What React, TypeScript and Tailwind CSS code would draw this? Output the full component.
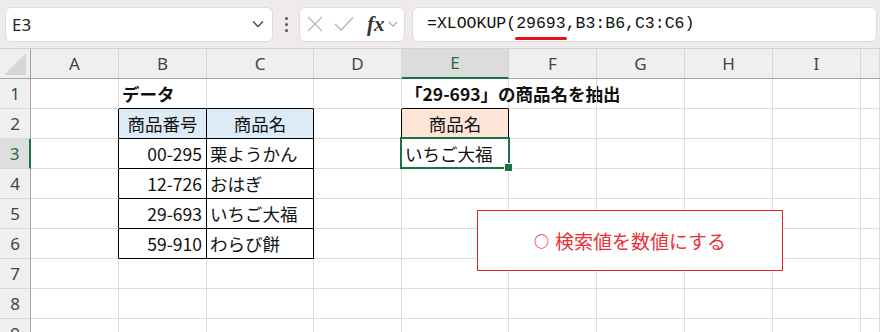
import type { ReactNode } from "react";

const COLS = ["A", "B", "C", "D", "E", "F", "G", "H", "I", "J"];
const WIDTHS = [
  "w-[88px]",
  "w-[88px]",
  "w-[107px]",
  "w-[88px]",
  "w-[107px]",
  "w-[88px]",
  "w-[88px]",
  "w-[88px]",
  "w-[88px]",
  "flex-1",
];

type Cell = {
  text?: ReactNode;
  align?: "left" | "right" | "center";
  bold?: boolean;
  bg?: string;
  right?: boolean; // black right border
  bottom?: boolean; // black bottom border
};

// row number -> column index -> cell
const DATA: Record<number, Record<number, Cell>> = {
  1: {
    1: { text: "データ", bold: true, bottom: true },
    2: { bottom: true },
    4: { text: "「29-693」の商品名を抽出", bold: true, bottom: true },
  },
  2: {
    0: { right: true },
    1: { text: "商品番号", align: "center", bg: "bg-[#ddebf7]", right: true, bottom: true },
    2: { text: "商品名", align: "center", bg: "bg-[#ddebf7]", right: true, bottom: true },
    3: { right: true },
    4: { text: "商品名", align: "center", bg: "bg-[#fce4d6]", right: true, bottom: true },
  },
  3: {
    0: { right: true },
    1: { text: "00-295", align: "right", right: true, bottom: true },
    2: { text: "栗ようかん", right: true, bottom: true },
    4: { text: "いちご大福" },
  },
  4: {
    0: { right: true },
    1: { text: "12-726", align: "right", right: true, bottom: true },
    2: { text: "おはぎ", right: true, bottom: true },
  },
  5: {
    0: { right: true },
    1: { text: "29-693", align: "right", right: true, bottom: true },
    2: { text: "いちご大福", right: true, bottom: true },
  },
  6: {
    0: { right: true },
    1: { text: "59-910", align: "right", right: true, bottom: true },
    2: { text: "わらび餅", right: true, bottom: true },
  },
};

function Chevron({ className }: { className?: string }) {
  return (
    <svg width="12" height="8" viewBox="0 0 12 8" className={className}>
      <path d="M1 1.5 L6 6.5 L11 1.5" fill="none" stroke="currentColor" strokeWidth="1.3" />
    </svg>
  );
}

function Toolbar() {
  return (
    <div className="h-[49px] bg-[#efebea] border-b border-[#d2d2d2] flex items-center pl-[5px] gap-0">
      {/* name box */}
      <div className="w-[268px] h-[35px] bg-white border border-[#dcdcdc] rounded-[6px] flex items-center justify-between pl-[6px] pr-[8px]">
        <span className="text-[17px] text-[#222] font-['Noto_Sans',sans-serif] leading-none">E3</span>
        <Chevron className="text-[#444]" />
      </div>
      {/* dots */}
      <div className="w-[26px] flex flex-col items-center gap-[3px]">
        <span className="w-[3px] h-[3px] bg-[#555] rounded-full" />
        <span className="w-[3px] h-[3px] bg-[#555] rounded-full" />
        <span className="w-[3px] h-[3px] bg-[#555] rounded-full" />
      </div>
      {/* function box */}
      <div className="w-[106px] h-[35px] bg-white border border-[#dcdcdc] rounded-[6px] flex items-center pl-[6px]">
        <svg width="16" height="16" viewBox="0 0 16 16" className="ml-[1px]">
          <path d="M1 1 L15 15 M15 1 L1 15" stroke="#b4b4b4" strokeWidth="1.3" />
        </svg>
        <svg width="20" height="16" viewBox="0 0 20 16" className="ml-[11px]">
          <path d="M1 8 L7 14 L19 1.5" fill="none" stroke="#b4b4b4" strokeWidth="1.3" />
        </svg>
        <span className="ml-[13px] text-[21px] italic font-bold font-['Liberation_Serif',serif] text-[#333] leading-none">
          fx
        </span>
        <Chevron className="ml-[3px] text-[#999] w-[10px]" />
      </div>
      {/* formula box */}
      <div className="ml-[7px] w-[465px] h-[35px] bg-white border border-[#dcdcdc] rounded-[6px] flex items-center pl-[14px]">
        <span className="text-[16.5px] text-[#111] font-['Liberation_Mono',monospace] leading-none whitespace-pre">
          =XLOOKUP(
          <span className="relative">
            29693
            <span className="absolute left-[-1px] right-[-1px] bottom-[-7px] h-[3px] bg-[#e8101c] rounded-full" />
          </span>
          ,B3:B6,C3:C6)
        </span>
      </div>
    </div>
  );
}

function HeaderRow() {
  return (
    <div className="flex h-[30px] bg-[#efefef] border-b border-[#a3a3a3] font-['Noto_Sans',sans-serif] text-[17px] text-[#444]">
      <div className="w-[31px] border-r border-[#a3a3a3] relative">
        <svg width="22" height="22" viewBox="0 0 22 22" className="absolute right-[4px] bottom-[3px]">
          <path d="M22 0 L22 22 L0 22 Z" fill="#d5d5d5" />
        </svg>
      </div>
      {COLS.map((c, i) =>
        c === "E" ? (
          <div
            key={c}
            className={`${WIDTHS[i]} bg-[#dcdcdc] border-r border-[#d0d0d0] border-b-2 border-b-[#1e7145] -mb-px flex items-center justify-center text-[#1e6b41]`}
          >
            {c}
          </div>
        ) : (
          <div key={c} className={`${WIDTHS[i]} border-r border-[#d7d7d7] flex items-center justify-center`}>
            {c === "J" ? "" : c}
          </div>
        ),
      )}
    </div>
  );
}

function Row({ n }: { n: number }) {
  const cells = DATA[n] ?? {};
  const selected = n === 3;
  return (
    <div className="flex h-[30px]">
      <div
        className={`w-[31px] flex items-center justify-center border-b border-[#d7d7d7] font-['Noto_Sans',sans-serif] text-[17px] ${
          selected
            ? "bg-[#dedede] text-[#1e6b41] border-r-2 border-r-[#1e7145]"
            : "bg-[#efefef] text-[#444] border-r border-r-[#a3a3a3]"
        }`}
      >
        {n}
      </div>
      {COLS.map((c, i) => {
        const cell = cells[i] ?? {};
        return (
          <div
            key={c}
            className={`${WIDTHS[i]} ${cell.bg ?? ""} border-r border-b ${
              cell.right ? "border-r-black" : "border-r-[#dcdcdc]"
            } ${cell.bottom ? "border-b-black" : "border-b-[#dcdcdc]"} flex items-center whitespace-nowrap text-[17.5px] leading-none text-[#111] font-['Noto_Sans_CJK_JP',sans-serif] ${
              cell.align === "right"
                ? "justify-end pr-[4px]"
                : cell.align === "center"
                  ? "justify-center"
                  : "justify-start pl-[3px]"
            } ${cell.bold ? "font-bold" : ""}`}
          >
            {cell.text}
          </div>
        );
      })}
    </div>
  );
}

export default function App() {
  return (
    <div className="w-[880px] h-[332px] overflow-hidden bg-white">
      <Toolbar />
      <div className="relative">
        <HeaderRow />
        {[1, 2, 3, 4, 5, 6, 7, 8, 9].map((n) => (
          <Row key={n} n={n} />
        ))}

        {/* active cell E3 */}
        <div className="absolute left-[400px] top-[88px] w-[110px] h-[32px] border-2 border-[#1e7145]" />
        <div className="absolute left-[505px] top-[115px] w-[7px] h-[7px] bg-[#1e7145] outline outline-1 outline-white" />

        {/* callout */}
        <div className="absolute left-[477px] top-[161px] w-[306px] h-[61px] border-[1.5px] border-[#e8202a] bg-white flex items-center justify-center">
          <span className="flex items-center text-[19px] text-[#e8303a] font-['Noto_Sans_CJK_JP',sans-serif] leading-none whitespace-nowrap">
            <span className="text-[15px] font-bold mr-[6px]">○</span>
            検索値を数値にする
          </span>
        </div>
      </div>
    </div>
  );
}
